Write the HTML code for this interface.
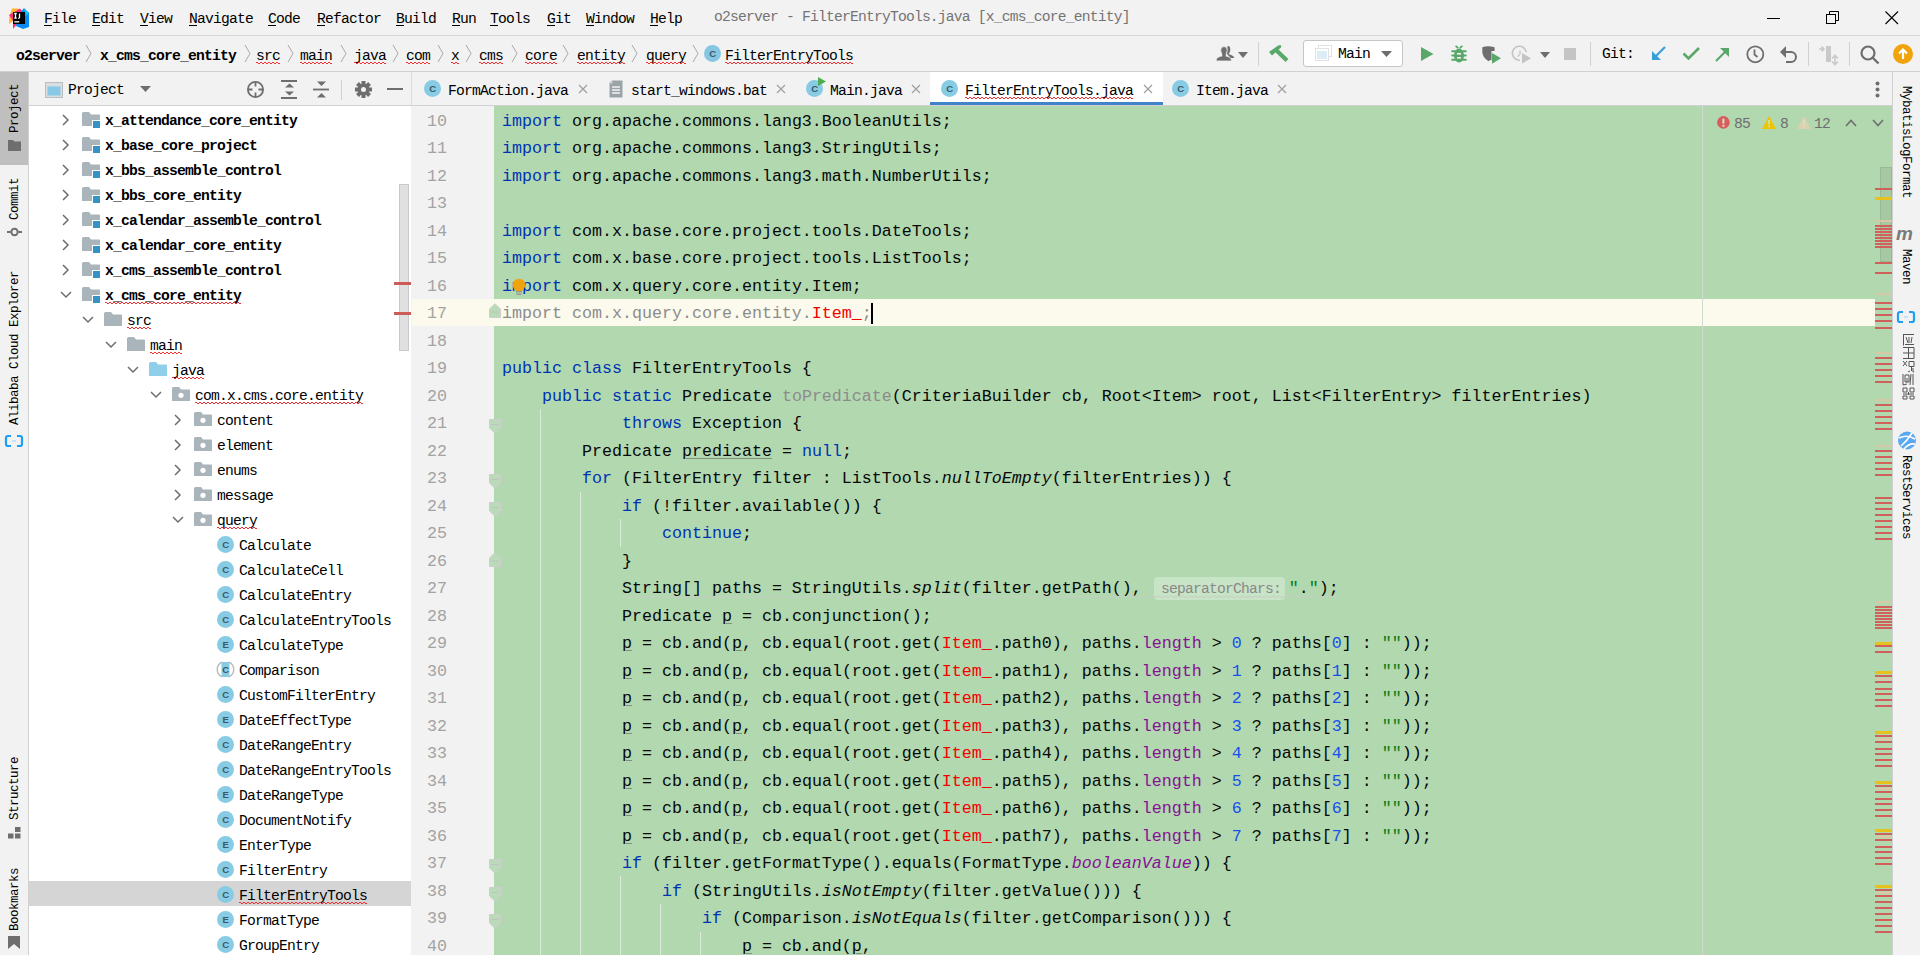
<!DOCTYPE html><html><head><meta charset="utf-8"><style>
*{margin:0;padding:0;box-sizing:border-box}
html,body{width:1920px;height:955px;overflow:hidden;background:#f2f2f2;font-family:"Liberation Mono",monospace;color:#000}
.a{position:absolute;white-space:pre}
.ui{font-size:14.67px;letter-spacing:-0.8px;line-height:16px}
.code{font-size:16.67px;white-space:pre;position:absolute;left:502px;height:27.5px;line-height:27.5px;color:#080808}
.kw{color:#0033b3}
.num{color:#1750eb}
.str{color:#067d17}
.fld{color:#871094}
.red{color:#f50000}
.gr{color:#8c8c8c}
.it{font-style:italic}
.ul{text-decoration:underline;text-decoration-color:#7f8f7e;text-underline-offset:2px;text-decoration-thickness:1px}
.wv{position:relative}.wv::after{content:'';position:absolute;left:0;right:0;bottom:0px;height:2px;background:repeating-linear-gradient(90deg,#f03030 0 2px,transparent 2px 4px) 0 0/100% 1px no-repeat,repeating-linear-gradient(90deg,transparent 0 2px,#f03030 2px 4px) 0 1px/100% 1px no-repeat}
.vt{writing-mode:vertical-rl;font-size:12.5px;letter-spacing:-0.5px;line-height:14px;color:#000}
.vl{transform:rotate(180deg)}
svg{position:absolute;overflow:visible}
</style></head><body><div class="a" style="left:0px;top:35px;width:1920px;height:1px;background:#d5d5d5;"></div><div class="a" style="left:0px;top:71px;width:1920px;height:1px;background:#d1d1d1;"></div><svg style="left:9px;top:8px;" width="21" height="21" viewBox="0 0 21 21"><polygon points="3,0.5 9,0.5 12,4 4,13 0,16 0.5,8" fill="#ffb42a"/>
<polygon points="0,7 7,3 11,0.5 14,4 10,14 4,21 4,13" fill="#fe2f7a"/>
<polygon points="15,0 20,5 20,19 14,21 7,18 9,8" fill="#0a8cf5"/>
<polygon points="15,1 20,5 17,8" fill="#13c5f5"/>
<rect x="4" y="4" width="12" height="12" fill="#000"/>
<path d="M5.2 5.5h2.6M6.5 5.5v4.6M5.2 10.1h2.6M10.5 5.5v3.8q0 1.1-1.3 1" stroke="#fff" stroke-width="1.3" fill="none"/><rect x="5.3" y="13.2" width="5" height="1.3" fill="#fff"/></svg><div class="a ui" style="left:44px;top:11px;"><u style="text-underline-offset:2px">F</u>ile</div><div class="a ui" style="left:92px;top:11px;"><u style="text-underline-offset:2px">E</u>dit</div><div class="a ui" style="left:140px;top:11px;"><u style="text-underline-offset:2px">V</u>iew</div><div class="a ui" style="left:189px;top:11px;"><u style="text-underline-offset:2px">N</u>avigate</div><div class="a ui" style="left:268px;top:11px;"><u style="text-underline-offset:2px">C</u>ode</div><div class="a ui" style="left:317px;top:11px;"><u style="text-underline-offset:2px">R</u>efactor</div><div class="a ui" style="left:396px;top:11px;"><u style="text-underline-offset:2px">B</u>uild</div><div class="a ui" style="left:452px;top:11px;"><u style="text-underline-offset:2px">R</u>un</div><div class="a ui" style="left:490px;top:11px;"><u style="text-underline-offset:2px">T</u>ools</div><div class="a ui" style="left:547px;top:11px;"><u style="text-underline-offset:2px">G</u>it</div><div class="a ui" style="left:586px;top:11px;"><u style="text-underline-offset:2px">W</u>indow</div><div class="a ui" style="left:650px;top:11px;"><u style="text-underline-offset:2px">H</u>elp</div><div class="a ui" style="left:714px;top:9px;color:#747474">o2server - FilterEntryTools.java [x_cms_core_entity]</div><div class="a" style="left:1767px;top:18px;width:13px;height:1px;background:#000;"></div><svg style="left:1826px;top:11px;" width="14" height="14" viewBox="0 0 14 14"><rect x="0.5" y="3.5" width="9" height="9" fill="none" stroke="#000"/><path d="M3.5 3.5V0.5h9v9h-3" fill="none" stroke="#000"/></svg><svg style="left:1885px;top:11px;" width="14" height="14" viewBox="0 0 14 14"><path d="M0.5 0.5L13 13M13 0.5L0.5 13" stroke="#000" stroke-width="1.1"/></svg><div class="a ui" style="left:16px;top:48px;font-weight:bold;">o2server</div><div class="a ui" style="left:100px;top:48px;font-weight:bold;">x_cms_core_entity</div><div class="a ui" style="left:256px;top:48px;"><span class="wv">src</span></div><div class="a ui" style="left:300px;top:48px;"><span class="wv">main</span></div><div class="a ui" style="left:354px;top:48px;"><span class="wv">java</span></div><div class="a ui" style="left:406px;top:48px;"><span class="wv">com</span></div><div class="a ui" style="left:451px;top:48px;"><span class="wv">x</span></div><div class="a ui" style="left:479px;top:48px;"><span class="wv">cms</span></div><div class="a ui" style="left:525px;top:48px;"><span class="wv">core</span></div><div class="a ui" style="left:577px;top:48px;"><span class="wv">entity</span></div><div class="a ui" style="left:646px;top:48px;"><span class="wv">query</span></div><svg style="left:85px;top:44px;" width="7" height="20" viewBox="0 0 7 20"><path d="M1 1L6 9.5L1 18" fill="none" stroke="#a8a8a8" stroke-width="1"/></svg><svg style="left:244px;top:44px;" width="7" height="20" viewBox="0 0 7 20"><path d="M1 1L6 9.5L1 18" fill="none" stroke="#a8a8a8" stroke-width="1"/></svg><svg style="left:287px;top:44px;" width="7" height="20" viewBox="0 0 7 20"><path d="M1 1L6 9.5L1 18" fill="none" stroke="#a8a8a8" stroke-width="1"/></svg><svg style="left:340px;top:44px;" width="7" height="20" viewBox="0 0 7 20"><path d="M1 1L6 9.5L1 18" fill="none" stroke="#a8a8a8" stroke-width="1"/></svg><svg style="left:392px;top:44px;" width="7" height="20" viewBox="0 0 7 20"><path d="M1 1L6 9.5L1 18" fill="none" stroke="#a8a8a8" stroke-width="1"/></svg><svg style="left:437px;top:44px;" width="7" height="20" viewBox="0 0 7 20"><path d="M1 1L6 9.5L1 18" fill="none" stroke="#a8a8a8" stroke-width="1"/></svg><svg style="left:465px;top:44px;" width="7" height="20" viewBox="0 0 7 20"><path d="M1 1L6 9.5L1 18" fill="none" stroke="#a8a8a8" stroke-width="1"/></svg><svg style="left:511px;top:44px;" width="7" height="20" viewBox="0 0 7 20"><path d="M1 1L6 9.5L1 18" fill="none" stroke="#a8a8a8" stroke-width="1"/></svg><svg style="left:562px;top:44px;" width="7" height="20" viewBox="0 0 7 20"><path d="M1 1L6 9.5L1 18" fill="none" stroke="#a8a8a8" stroke-width="1"/></svg><svg style="left:631px;top:44px;" width="7" height="20" viewBox="0 0 7 20"><path d="M1 1L6 9.5L1 18" fill="none" stroke="#a8a8a8" stroke-width="1"/></svg><svg style="left:692px;top:44px;" width="7" height="20" viewBox="0 0 7 20"><path d="M1 1L6 9.5L1 18" fill="none" stroke="#a8a8a8" stroke-width="1"/></svg><svg style="left:704px;top:45px;" width="17" height="17" viewBox="0 0 17 17"><circle cx="8.5" cy="8.5" r="8.5" fill="#87c6e3"/><text x="8.6" y="12.0" text-anchor="middle" font-size="9.5" font-family="Liberation Sans" font-weight="bold" fill="#3b5866">C</text></svg><div class="a ui" style="left:725px;top:48px;"><span class="wv">FilterEntryTools</span></div><svg style="left:1215px;top:45px;" width="20" height="17" viewBox="0 0 20 17"><path d="M12.5 1.2Q15.2 0.6 15.3 4.5Q15.3 8 13.5 9.2Q18.5 10.2 19.5 13H15.5L12 9z" fill="#6e6e6e"/><path d="M1 16Q1 11.3 8.8 10.8Q16.6 11.3 16.6 16z" fill="#6e6e6e" stroke="#f2f2f2" stroke-width=".8"/><ellipse cx="9" cy="5.4" rx="3.3" ry="3.9" fill="#6e6e6e" stroke="#f2f2f2" stroke-width=".8"/><rect x="7.2" y="8" width="3.6" height="4" fill="#6e6e6e"/></svg><svg style="left:1238px;top:52px;" width="11" height="7" viewBox="0 0 11 7"><path d="M0 0h10L5 6z" fill="#6e6e6e"/></svg><div class="a" style="left:1258px;top:42px;width:1px;height:24px;background:#d0d0d0;"></div><svg style="left:1268px;top:44px;" width="21" height="20" viewBox="0 0 21 20"><path d="M1 8L10.5 1.2H13.2L13 3.6L4 11.5z" fill="#59a869"/><path d="M7.5 5.5L19 16.5" stroke="#59a869" stroke-width="4.2"/></svg><div class="a" style="left:1303px;top:40px;width:100px;height:27px;background:#ffffff;border:1px solid #c6c6c6;border-radius:3px"></div><svg style="left:1315px;top:45px;" width="18" height="16" viewBox="0 0 18 16"><rect x="3.5" y="0.5" width="13" height="11" fill="none" stroke="#e2e2e2"/><rect x="0.5" y="3.5" width="13" height="12" fill="#fff" stroke="#e2e2e2"/><rect x="2" y="6" width="10" height="8" fill="#dcedf5"/></svg><div class="a ui" style="left:1338px;top:46px;">Main</div><svg style="left:1381px;top:51px;" width="11" height="7" viewBox="0 0 11 7"><path d="M0 0h11L5.5 6z" fill="#6e6e6e"/></svg><svg style="left:1421px;top:47px;" width="13" height="15" viewBox="0 0 13 15"><path d="M0 0L12.5 7L0 14z" fill="#59a869"/></svg><svg style="left:1450px;top:45px;" width="18" height="18" viewBox="0 0 18 18"><g fill="#59a869"><rect x="1.2" y="5.3" width="15.6" height="1.9" rx=".9"/><rect x="1.2" y="9.5" width="15.6" height="1.9" rx=".9"/><rect x="1.2" y="13.8" width="15.6" height="1.9" rx=".9"/><ellipse cx="9" cy="10.6" rx="5" ry="7"/></g><path d="M5.6 0.8L8.2 3.2M12.4 0.8L9.8 3.2" stroke="#59a869" stroke-width="1.8"/><rect x="7" y="8" width="4" height="1.6" fill="#f2f2f2"/><rect x="7" y="12" width="4" height="1.6" fill="#f2f2f2"/></svg><svg style="left:1482px;top:46px;" width="20" height="19" viewBox="0 0 20 19"><path d="M0.3 1.2Q6 -0.6 12.6 1.2V5H9.5V15Q9.5 13 6.4 15.2Q0.3 11 0.3 6z" fill="#6e6e6e"/><path d="M10 7L19 12.3L10 17.8z" fill="#59a869"/></svg><svg style="left:1512px;top:46px;" width="20" height="19" viewBox="0 0 20 19"><path d="M14.3 6A7 7 0 1 0 8 14.2" fill="none" stroke="#c4c4c4" stroke-width="1.6"/><path d="M8 4.5V8.2L5.6 10.6" stroke="#c4c4c4" stroke-width="1.3" fill="none"/><path d="M10 7L19 12.3L10 17.8z" fill="#c4c4c4"/></svg><svg style="left:1540px;top:52px;" width="11" height="7" viewBox="0 0 11 7"><path d="M0 0h10L5 6z" fill="#6e6e6e"/></svg><div class="a" style="left:1564px;top:48px;width:12px;height:12px;background:#c4c4c4;"></div><div class="a" style="left:1590px;top:42px;width:1px;height:24px;background:#d0d0d0;"></div><div class="a ui" style="left:1602px;top:46px;">Git:</div><svg style="left:1651px;top:46px;" width="15" height="15" viewBox="0 0 15 15"><path d="M14 1L3 12" stroke="#389fd6" stroke-width="2.2"/><path d="M1 5V14H10z" fill="#389fd6"/></svg><svg style="left:1682px;top:46px;" width="18" height="14" viewBox="0 0 18 14"><path d="M1.5 7.5L6.5 12.5L17 2" fill="none" stroke="#59a869" stroke-width="2.6"/></svg><svg style="left:1715px;top:47px;" width="15" height="15" viewBox="0 0 15 15"><path d="M1 14L12 3" stroke="#59a869" stroke-width="2.2"/><path d="M5 1H14V10z" fill="#59a869"/></svg><svg style="left:1746px;top:45px;" width="19" height="19" viewBox="0 0 19 19"><circle cx="9.3" cy="9.3" r="8" fill="none" stroke="#6e6e6e" stroke-width="1.8"/><path d="M8.5 4.5V9.5L11.5 12" fill="none" stroke="#6e6e6e" stroke-width="1.8"/></svg><svg style="left:1780px;top:46px;" width="18" height="16" viewBox="0 0 18 16"><path d="M4 6H11a5 5 0 0 1 0 10H6" fill="none" stroke="#6e6e6e" stroke-width="2"/><path d="M0 6L6 0V12z" fill="#6e6e6e"/></svg><div class="a" style="left:1808px;top:42px;width:1px;height:24px;background:#d0d0d0;"></div><svg style="left:1819px;top:45px;" width="22" height="20" viewBox="0 0 22 20"><rect x="7" y="1" width="5" height="16" fill="#c9c9c9"/><path d="M0 4h4M2.5 1.5L5 4L2.5 6.5" stroke="#c9c9c9" stroke-width="1.6" fill="none"/><path d="M16 11v8M13 13.5l3-3l3 3M13 16.5l3 3l3-3" stroke="#c9c9c9" stroke-width="1.6" fill="none"/></svg><div class="a" style="left:1849px;top:42px;width:1px;height:24px;background:#d0d0d0;"></div><svg style="left:1860px;top:45px;" width="20" height="19" viewBox="0 0 20 19"><circle cx="8" cy="8" r="6.5" fill="none" stroke="#6e6e6e" stroke-width="2.2"/><path d="M12.5 12.5L18.5 18.5" stroke="#6e6e6e" stroke-width="2.4"/></svg><svg style="left:1893px;top:44px;" width="20" height="20" viewBox="0 0 20 20"><circle cx="10" cy="10" r="10" fill="#f0a30b"/><path d="M10 15V6M6 9.5L10 5.5L14 9.5" stroke="#fff" stroke-width="2.2" fill="none"/></svg><div class="a" style="left:28px;top:72px;width:1px;height:883px;background:#d1d1d1;"></div><div class="a" style="left:0px;top:72px;width:28px;height:93px;background:#bfbfbf;"></div><div class="a vt vl" style="left:8px;top:82px;height:51px">Project</div><svg style="left:8px;top:139px;" width="13" height="12" viewBox="0 0 13 12"><path d="M0 1h5l1.5 1.5H13V12H0z" fill="#6e6e6e"/></svg><div class="a vt vl" style="left:8px;top:176px;height:44px">Commit</div><svg style="left:7px;top:226px;" width="15" height="12" viewBox="0 0 15 12"><circle cx="7.5" cy="6" r="3.2" fill="none" stroke="#6e6e6e" stroke-width="2"/><path d="M0 6h3.5M11.5 6H15" stroke="#6e6e6e" stroke-width="2"/></svg><div class="a vt vl" style="left:8px;top:269px;height:156px">Alibaba Cloud Explorer</div><svg style="left:5px;top:435px;" width="18" height="12" viewBox="0 0 18 12"><path d="M6 1H3Q1 1 1 3V9Q1 11 3 11H6M12 1H15Q17 1 17 3V9Q17 11 15 11H12" fill="none" stroke="#1e9ff2" stroke-width="2.2"/><rect x="7" y="5.4" width="4" height="1.2" fill="#a8d8f8"/></svg><div class="a vt vl" style="left:8px;top:755px;height:65px">Structure</div><svg style="left:8px;top:827px;" width="14" height="12" viewBox="0 0 14 12"><rect x="7" y="0" width="5.5" height="5" fill="#6e6e6e"/><rect x="0" y="6.5" width="5.5" height="5" fill="#6e6e6e"/><rect x="7" y="6.5" width="5.5" height="5" fill="#6e6e6e"/></svg><div class="a vt vl" style="left:8px;top:866px;height:65px">Bookmarks</div><svg style="left:8px;top:936px;" width="13" height="14" viewBox="0 0 13 14"><path d="M0 0H12V13L6 8L0 13z" fill="#6e6e6e"/></svg><div class="a" style="left:1892px;top:72px;width:1px;height:883px;background:#d1d1d1;"></div><div class="a vt" style="left:1899px;top:86px">MybatisLogFormat</div><svg style="left:1896px;top:226px;" width="22" height="16" viewBox="0 0 22 16"><text x="0" y="14" font-size="19" font-family="Liberation Sans" font-style="italic" font-weight="bold" fill="#7a7a7a">m</text></svg><div class="a vt" style="left:1899px;top:249px">Maven</div><svg style="left:1897px;top:311px;" width="18" height="12" viewBox="0 0 18 12"><path d="M6 1H3Q1 1 1 3V9Q1 11 3 11H6M12 1H15Q17 1 17 3V9Q17 11 15 11H12" fill="none" stroke="#1e9ff2" stroke-width="2.2"/><rect x="7" y="5.4" width="4" height="1.2" fill="#a8d8f8"/></svg><svg style="left:1902px;top:333px;" width="13" height="66" viewBox="0 0 13 66"><g stroke="#555" stroke-width="1" fill="none"><path d="M1 1.5h11M1.5 1.5v11M4 4l2 6M7 4v6M10 4l-1 6M3 11.5h9"/><path d="M1 14.5h11M1 25.5h11M1 20h11M6.5 14.5v11M12 14.5v11"/><path d="M1 28l4 5M5 28l-4 5M7 28.5h5v5h-5zM9.5 33v5M8 38l-2 1M11 35v4h1"/><path d="M1 41v11M3 42h4v7h-4zM5 45v4M9 41l-1 11M11 41v11M1 52l4-1"/><path d="M1 55h4v4h-4zM8 55h4v4h-4zM1 61h11M6.5 59v3M1 63h4v3h-4zM8 63h4v3h-4z"/></g></svg><svg style="left:1897px;top:431px;" width="20" height="19" viewBox="0 0 20 19"><circle cx="10" cy="9.5" r="9" fill="#5aa9f0"/><path d="M2 7Q10 3 18 8M4 15Q10 10 15 2M7 18Q12 12 18 13" fill="none" stroke="#fff" stroke-width="1.6"/></svg><div class="a vt" style="left:1899px;top:455px">RestServices</div><svg style="left:45px;top:82px;" width="18" height="16" viewBox="0 0 18 16"><rect x="0.5" y="0.5" width="17" height="15" fill="#d8dde0" stroke="#b9bec2"/><rect x="2.5" y="4.5" width="13" height="9" fill="#87c9e6"/></svg><div class="a ui" style="left:68px;top:82px;">Project</div><svg style="left:140px;top:86px;" width="11" height="7" viewBox="0 0 11 7"><path d="M0 0h11L5.5 6z" fill="#6e6e6e"/></svg><svg style="left:246px;top:80px;" width="19" height="19" viewBox="0 0 19 19"><circle cx="9.5" cy="9.5" r="7.6" fill="none" stroke="#6e6e6e" stroke-width="1.8"/><path d="M9.5 2v4.5M9.5 12.5v4.5M2 9.5h4.5M12.5 9.5h4.5" stroke="#6e6e6e" stroke-width="1.8"/></svg><svg style="left:281px;top:80px;" width="17" height="19" viewBox="0 0 17 19"><path d="M0 1h16M0 18h16" stroke="#6e6e6e" stroke-width="1.8"/><path d="M4 7.5L8.5 3.5L13 7.5zM4 11.5L8.5 15.5L13 11.5z" fill="#6e6e6e"/></svg><svg style="left:313px;top:80px;" width="17" height="19" viewBox="0 0 17 19"><path d="M0 9.5h16" stroke="#6e6e6e" stroke-width="1.8"/><path d="M4 1.5L8.5 6L13 1.5zM4 17.5L8.5 13L13 17.5z" fill="#6e6e6e"/></svg><div class="a" style="left:341px;top:80px;width:1px;height:20px;background:#d0d0d0;"></div><svg style="left:355px;top:81px;" width="17" height="17" viewBox="0 0 17 17"><g fill="#6e6e6e" transform="translate(8.5 8.5)"><circle r="6"/><rect x="-2" y="-8.5" width="4" height="4" transform="rotate(0)"/><rect x="-2" y="-8.5" width="4" height="4" transform="rotate(45)"/><rect x="-2" y="-8.5" width="4" height="4" transform="rotate(90)"/><rect x="-2" y="-8.5" width="4" height="4" transform="rotate(135)"/><rect x="-2" y="-8.5" width="4" height="4" transform="rotate(180)"/><rect x="-2" y="-8.5" width="4" height="4" transform="rotate(225)"/><rect x="-2" y="-8.5" width="4" height="4" transform="rotate(270)"/><rect x="-2" y="-8.5" width="4" height="4" transform="rotate(315)"/></g><circle cx="8.5" cy="8.5" r="2.5" fill="#f2f2f2"/></svg><div class="a" style="left:387px;top:88px;width:16px;height:2px;background:#6e6e6e;"></div><div class="a" style="left:411px;top:72px;width:1px;height:34px;background:#dcdcdc;"></div><div class="a" style="left:29px;top:106px;width:382px;height:849px;background:#ffffff;"></div><div class="a" style="left:29px;top:105px;width:1863px;height:1px;background:#d1d1d1;"></div><div class="a" style="left:29px;top:881px;width:382px;height:25px;background:#d5d5d5;"></div><svg style="left:62px;top:114px;" width="8" height="12" viewBox="0 0 8 12"><path d="M1 1L6 6L1 11" fill="none" stroke="#6e6e6e" stroke-width="1.5"/></svg><svg style="left:82px;top:112px;" width="18" height="16" viewBox="0 0 18 16"><path d="M0 1.5Q0 0 1.5 0H7L9 2.5H17Q18 2.5 18 3.5V14H0z" fill="#aab4bb"/><rect x="10" y="8" width="8" height="8" fill="#fff"/><rect x="11" y="9" width="7" height="7" fill="#3592c4"/></svg><div class="a ui" style="left:105px;top:113px;font-weight:bold;">x_attendance_core_entity</div><svg style="left:62px;top:139px;" width="8" height="12" viewBox="0 0 8 12"><path d="M1 1L6 6L1 11" fill="none" stroke="#6e6e6e" stroke-width="1.5"/></svg><svg style="left:82px;top:137px;" width="18" height="16" viewBox="0 0 18 16"><path d="M0 1.5Q0 0 1.5 0H7L9 2.5H17Q18 2.5 18 3.5V14H0z" fill="#aab4bb"/><rect x="10" y="8" width="8" height="8" fill="#fff"/><rect x="11" y="9" width="7" height="7" fill="#3592c4"/></svg><div class="a ui" style="left:105px;top:138px;font-weight:bold;">x_base_core_project</div><svg style="left:62px;top:164px;" width="8" height="12" viewBox="0 0 8 12"><path d="M1 1L6 6L1 11" fill="none" stroke="#6e6e6e" stroke-width="1.5"/></svg><svg style="left:82px;top:162px;" width="18" height="16" viewBox="0 0 18 16"><path d="M0 1.5Q0 0 1.5 0H7L9 2.5H17Q18 2.5 18 3.5V14H0z" fill="#aab4bb"/><rect x="10" y="8" width="8" height="8" fill="#fff"/><rect x="11" y="9" width="7" height="7" fill="#3592c4"/></svg><div class="a ui" style="left:105px;top:163px;font-weight:bold;">x_bbs_assemble_control</div><svg style="left:62px;top:189px;" width="8" height="12" viewBox="0 0 8 12"><path d="M1 1L6 6L1 11" fill="none" stroke="#6e6e6e" stroke-width="1.5"/></svg><svg style="left:82px;top:187px;" width="18" height="16" viewBox="0 0 18 16"><path d="M0 1.5Q0 0 1.5 0H7L9 2.5H17Q18 2.5 18 3.5V14H0z" fill="#aab4bb"/><rect x="10" y="8" width="8" height="8" fill="#fff"/><rect x="11" y="9" width="7" height="7" fill="#3592c4"/></svg><div class="a ui" style="left:105px;top:188px;font-weight:bold;">x_bbs_core_entity</div><svg style="left:62px;top:214px;" width="8" height="12" viewBox="0 0 8 12"><path d="M1 1L6 6L1 11" fill="none" stroke="#6e6e6e" stroke-width="1.5"/></svg><svg style="left:82px;top:212px;" width="18" height="16" viewBox="0 0 18 16"><path d="M0 1.5Q0 0 1.5 0H7L9 2.5H17Q18 2.5 18 3.5V14H0z" fill="#aab4bb"/><rect x="10" y="8" width="8" height="8" fill="#fff"/><rect x="11" y="9" width="7" height="7" fill="#3592c4"/></svg><div class="a ui" style="left:105px;top:213px;font-weight:bold;">x_calendar_assemble_control</div><svg style="left:62px;top:239px;" width="8" height="12" viewBox="0 0 8 12"><path d="M1 1L6 6L1 11" fill="none" stroke="#6e6e6e" stroke-width="1.5"/></svg><svg style="left:82px;top:237px;" width="18" height="16" viewBox="0 0 18 16"><path d="M0 1.5Q0 0 1.5 0H7L9 2.5H17Q18 2.5 18 3.5V14H0z" fill="#aab4bb"/><rect x="10" y="8" width="8" height="8" fill="#fff"/><rect x="11" y="9" width="7" height="7" fill="#3592c4"/></svg><div class="a ui" style="left:105px;top:238px;font-weight:bold;">x_calendar_core_entity</div><svg style="left:62px;top:264px;" width="8" height="12" viewBox="0 0 8 12"><path d="M1 1L6 6L1 11" fill="none" stroke="#6e6e6e" stroke-width="1.5"/></svg><svg style="left:82px;top:262px;" width="18" height="16" viewBox="0 0 18 16"><path d="M0 1.5Q0 0 1.5 0H7L9 2.5H17Q18 2.5 18 3.5V14H0z" fill="#aab4bb"/><rect x="10" y="8" width="8" height="8" fill="#fff"/><rect x="11" y="9" width="7" height="7" fill="#3592c4"/></svg><div class="a ui" style="left:105px;top:263px;font-weight:bold;">x_cms_assemble_control</div><svg style="left:60px;top:291px;" width="12" height="8" viewBox="0 0 12 8"><path d="M1 1L6 6L11 1" fill="none" stroke="#6e6e6e" stroke-width="1.5"/></svg><svg style="left:82px;top:287px;" width="18" height="16" viewBox="0 0 18 16"><path d="M0 1.5Q0 0 1.5 0H7L9 2.5H17Q18 2.5 18 3.5V14H0z" fill="#aab4bb"/><rect x="10" y="8" width="8" height="8" fill="#fff"/><rect x="11" y="9" width="7" height="7" fill="#3592c4"/></svg><div class="a ui" style="left:105px;top:288px;font-weight:bold;"><span class="wv">x_cms_core_entity</span></div><svg style="left:82px;top:316px;" width="12" height="8" viewBox="0 0 12 8"><path d="M1 1L6 6L11 1" fill="none" stroke="#6e6e6e" stroke-width="1.5"/></svg><svg style="left:104px;top:312px;" width="18" height="16" viewBox="0 0 18 16"><path d="M0 1.5Q0 0 1.5 0H7L9 2.5H17Q18 2.5 18 3.5V14H0z" fill="#aab4bb"/></svg><div class="a ui" style="left:127px;top:313px;"><span class="wv">src</span></div><svg style="left:105px;top:341px;" width="12" height="8" viewBox="0 0 12 8"><path d="M1 1L6 6L11 1" fill="none" stroke="#6e6e6e" stroke-width="1.5"/></svg><svg style="left:127px;top:337px;" width="18" height="16" viewBox="0 0 18 16"><path d="M0 1.5Q0 0 1.5 0H7L9 2.5H17Q18 2.5 18 3.5V14H0z" fill="#aab4bb"/></svg><div class="a ui" style="left:150px;top:338px;"><span class="wv">main</span></div><svg style="left:127px;top:366px;" width="12" height="8" viewBox="0 0 12 8"><path d="M1 1L6 6L11 1" fill="none" stroke="#6e6e6e" stroke-width="1.5"/></svg><svg style="left:149px;top:362px;" width="18" height="16" viewBox="0 0 18 16"><path d="M0 1.5Q0 0 1.5 0H7L9 2.5H17Q18 2.5 18 3.5V14H0z" fill="#8fcfea"/></svg><div class="a ui" style="left:172px;top:363px;"><span class="wv">java</span></div><svg style="left:150px;top:391px;" width="12" height="8" viewBox="0 0 12 8"><path d="M1 1L6 6L11 1" fill="none" stroke="#6e6e6e" stroke-width="1.5"/></svg><svg style="left:172px;top:387px;" width="18" height="16" viewBox="0 0 18 16"><path d="M0 1.5Q0 0 1.5 0H7L9 2.5H17Q18 2.5 18 3.5V14H0z" fill="#aab4bb"/><circle cx="9" cy="8.3" r="2.6" fill="#fff"/></svg><div class="a ui" style="left:195px;top:388px;"><span class="wv">com.x.cms.core.entity</span></div><svg style="left:174px;top:414px;" width="8" height="12" viewBox="0 0 8 12"><path d="M1 1L6 6L1 11" fill="none" stroke="#6e6e6e" stroke-width="1.5"/></svg><svg style="left:194px;top:412px;" width="18" height="16" viewBox="0 0 18 16"><path d="M0 1.5Q0 0 1.5 0H7L9 2.5H17Q18 2.5 18 3.5V14H0z" fill="#aab4bb"/><circle cx="9" cy="8.3" r="2.6" fill="#fff"/></svg><div class="a ui" style="left:217px;top:413px;">content</div><svg style="left:174px;top:439px;" width="8" height="12" viewBox="0 0 8 12"><path d="M1 1L6 6L1 11" fill="none" stroke="#6e6e6e" stroke-width="1.5"/></svg><svg style="left:194px;top:437px;" width="18" height="16" viewBox="0 0 18 16"><path d="M0 1.5Q0 0 1.5 0H7L9 2.5H17Q18 2.5 18 3.5V14H0z" fill="#aab4bb"/><circle cx="9" cy="8.3" r="2.6" fill="#fff"/></svg><div class="a ui" style="left:217px;top:438px;">element</div><svg style="left:174px;top:464px;" width="8" height="12" viewBox="0 0 8 12"><path d="M1 1L6 6L1 11" fill="none" stroke="#6e6e6e" stroke-width="1.5"/></svg><svg style="left:194px;top:462px;" width="18" height="16" viewBox="0 0 18 16"><path d="M0 1.5Q0 0 1.5 0H7L9 2.5H17Q18 2.5 18 3.5V14H0z" fill="#aab4bb"/><circle cx="9" cy="8.3" r="2.6" fill="#fff"/></svg><div class="a ui" style="left:217px;top:463px;">enums</div><svg style="left:174px;top:489px;" width="8" height="12" viewBox="0 0 8 12"><path d="M1 1L6 6L1 11" fill="none" stroke="#6e6e6e" stroke-width="1.5"/></svg><svg style="left:194px;top:487px;" width="18" height="16" viewBox="0 0 18 16"><path d="M0 1.5Q0 0 1.5 0H7L9 2.5H17Q18 2.5 18 3.5V14H0z" fill="#aab4bb"/><circle cx="9" cy="8.3" r="2.6" fill="#fff"/></svg><div class="a ui" style="left:217px;top:488px;">message</div><svg style="left:172px;top:516px;" width="12" height="8" viewBox="0 0 12 8"><path d="M1 1L6 6L11 1" fill="none" stroke="#6e6e6e" stroke-width="1.5"/></svg><svg style="left:194px;top:512px;" width="18" height="16" viewBox="0 0 18 16"><path d="M0 1.5Q0 0 1.5 0H7L9 2.5H17Q18 2.5 18 3.5V14H0z" fill="#aab4bb"/><circle cx="9" cy="8.3" r="2.6" fill="#fff"/></svg><div class="a ui" style="left:217px;top:513px;"><span class="wv">query</span></div><svg style="left:217px;top:536px;" width="17" height="17" viewBox="0 0 17 17"><circle cx="8.5" cy="8.5" r="8.5" fill="#87cbe4"/><text x="8.6" y="12.1" text-anchor="middle" font-size="9.5" font-family="Liberation Sans" font-weight="bold" fill="#3b5866">C</text></svg><div class="a ui" style="left:239px;top:538px;">Calculate</div><svg style="left:217px;top:561px;" width="17" height="17" viewBox="0 0 17 17"><circle cx="8.5" cy="8.5" r="8.5" fill="#87cbe4"/><text x="8.6" y="12.1" text-anchor="middle" font-size="9.5" font-family="Liberation Sans" font-weight="bold" fill="#3b5866">C</text></svg><div class="a ui" style="left:239px;top:563px;">CalculateCell</div><svg style="left:217px;top:586px;" width="17" height="17" viewBox="0 0 17 17"><circle cx="8.5" cy="8.5" r="8.5" fill="#87cbe4"/><text x="8.6" y="12.1" text-anchor="middle" font-size="9.5" font-family="Liberation Sans" font-weight="bold" fill="#3b5866">C</text></svg><div class="a ui" style="left:239px;top:588px;">CalculateEntry</div><svg style="left:217px;top:611px;" width="17" height="17" viewBox="0 0 17 17"><circle cx="8.5" cy="8.5" r="8.5" fill="#87cbe4"/><text x="8.6" y="12.1" text-anchor="middle" font-size="9.5" font-family="Liberation Sans" font-weight="bold" fill="#3b5866">C</text></svg><div class="a ui" style="left:239px;top:613px;">CalculateEntryTools</div><svg style="left:217px;top:636px;" width="17" height="17" viewBox="0 0 17 17"><circle cx="8.5" cy="8.5" r="8.5" fill="#87cbe4"/><text x="8.6" y="12.1" text-anchor="middle" font-size="9.5" font-family="Liberation Sans" font-weight="bold" fill="#3b5866">E</text></svg><div class="a ui" style="left:239px;top:638px;">CalculateType</div><svg style="left:217px;top:661px;" width="17" height="17" viewBox="0 0 17 17"><path d="M5 1.2A8 8 0 0 0 5 15.8" fill="none" stroke="#b9b9b9" stroke-width="1.4"/><path d="M12 1.2A8 8 0 0 1 12 15.8" fill="none" stroke="#b9b9b9" stroke-width="1.4"/><rect x="4.5" y="1" width="8" height="15" fill="#87cbe4"/><text x="8.6" y="12.1" text-anchor="middle" font-size="9.5" font-family="Liberation Sans" font-weight="bold" fill="#3b5866">C</text></svg><div class="a ui" style="left:239px;top:663px;">Comparison</div><svg style="left:217px;top:686px;" width="17" height="17" viewBox="0 0 17 17"><circle cx="8.5" cy="8.5" r="8.5" fill="#87cbe4"/><text x="8.6" y="12.1" text-anchor="middle" font-size="9.5" font-family="Liberation Sans" font-weight="bold" fill="#3b5866">C</text></svg><div class="a ui" style="left:239px;top:688px;">CustomFilterEntry</div><svg style="left:217px;top:711px;" width="17" height="17" viewBox="0 0 17 17"><circle cx="8.5" cy="8.5" r="8.5" fill="#87cbe4"/><text x="8.6" y="12.1" text-anchor="middle" font-size="9.5" font-family="Liberation Sans" font-weight="bold" fill="#3b5866">E</text></svg><div class="a ui" style="left:239px;top:713px;">DateEffectType</div><svg style="left:217px;top:736px;" width="17" height="17" viewBox="0 0 17 17"><circle cx="8.5" cy="8.5" r="8.5" fill="#87cbe4"/><text x="8.6" y="12.1" text-anchor="middle" font-size="9.5" font-family="Liberation Sans" font-weight="bold" fill="#3b5866">C</text></svg><div class="a ui" style="left:239px;top:738px;">DateRangeEntry</div><svg style="left:217px;top:761px;" width="17" height="17" viewBox="0 0 17 17"><circle cx="8.5" cy="8.5" r="8.5" fill="#87cbe4"/><text x="8.6" y="12.1" text-anchor="middle" font-size="9.5" font-family="Liberation Sans" font-weight="bold" fill="#3b5866">C</text></svg><div class="a ui" style="left:239px;top:763px;">DateRangeEntryTools</div><svg style="left:217px;top:786px;" width="17" height="17" viewBox="0 0 17 17"><circle cx="8.5" cy="8.5" r="8.5" fill="#87cbe4"/><text x="8.6" y="12.1" text-anchor="middle" font-size="9.5" font-family="Liberation Sans" font-weight="bold" fill="#3b5866">E</text></svg><div class="a ui" style="left:239px;top:788px;">DateRangeType</div><svg style="left:217px;top:811px;" width="17" height="17" viewBox="0 0 17 17"><circle cx="8.5" cy="8.5" r="8.5" fill="#87cbe4"/><text x="8.6" y="12.1" text-anchor="middle" font-size="9.5" font-family="Liberation Sans" font-weight="bold" fill="#3b5866">C</text></svg><div class="a ui" style="left:239px;top:813px;">DocumentNotify</div><svg style="left:217px;top:836px;" width="17" height="17" viewBox="0 0 17 17"><circle cx="8.5" cy="8.5" r="8.5" fill="#87cbe4"/><text x="8.6" y="12.1" text-anchor="middle" font-size="9.5" font-family="Liberation Sans" font-weight="bold" fill="#3b5866">E</text></svg><div class="a ui" style="left:239px;top:838px;">EnterType</div><svg style="left:217px;top:861px;" width="17" height="17" viewBox="0 0 17 17"><circle cx="8.5" cy="8.5" r="8.5" fill="#87cbe4"/><text x="8.6" y="12.1" text-anchor="middle" font-size="9.5" font-family="Liberation Sans" font-weight="bold" fill="#3b5866">C</text></svg><div class="a ui" style="left:239px;top:863px;">FilterEntry</div><svg style="left:217px;top:886px;" width="17" height="17" viewBox="0 0 17 17"><circle cx="8.5" cy="8.5" r="8.5" fill="#87cbe4"/><text x="8.6" y="12.1" text-anchor="middle" font-size="9.5" font-family="Liberation Sans" font-weight="bold" fill="#3b5866">C</text></svg><div class="a ui" style="left:239px;top:888px;"><span class="wv">FilterEntryTools</span></div><svg style="left:217px;top:911px;" width="17" height="17" viewBox="0 0 17 17"><circle cx="8.5" cy="8.5" r="8.5" fill="#87cbe4"/><text x="8.6" y="12.1" text-anchor="middle" font-size="9.5" font-family="Liberation Sans" font-weight="bold" fill="#3b5866">E</text></svg><div class="a ui" style="left:239px;top:913px;">FormatType</div><svg style="left:217px;top:936px;" width="17" height="17" viewBox="0 0 17 17"><circle cx="8.5" cy="8.5" r="8.5" fill="#87cbe4"/><text x="8.6" y="12.1" text-anchor="middle" font-size="9.5" font-family="Liberation Sans" font-weight="bold" fill="#3b5866">C</text></svg><div class="a ui" style="left:239px;top:938px;">GroupEntry</div><div class="a" style="left:399px;top:184px;width:10px;height:167px;background:#e0e0e0;border:1px solid #c9c9c9"></div><div class="a" style="left:394px;top:282px;width:17px;height:3px;background:#cc5c58;"></div><div class="a" style="left:394px;top:312px;width:17px;height:3px;background:#cc5c58;"></div><div class="a" style="left:412px;top:72px;width:1480px;height:33px;background:#f2f2f2;"></div><div class="a" style="left:930px;top:72px;width:233px;height:33px;background:#ffffff;"></div><div class="a" style="left:930px;top:102px;width:233px;height:3px;background:#4083c9;"></div><svg style="left:424px;top:80px;" width="17" height="17" viewBox="0 0 17 17"><circle cx="8.5" cy="8.5" r="8.5" fill="#87cbe4"/><text x="8.6" y="12.1" text-anchor="middle" font-size="9.5" font-family="Liberation Sans" font-weight="bold" fill="#3b5866">C</text></svg><div class="a ui" style="left:448px;top:83px;">FormAction.java</div><svg style="left:578px;top:84px;" width="10" height="10" viewBox="0 0 10 10"><path d="M1 1L9 9M9 1L1 9" stroke="#a0a0a0" stroke-width="1.2"/></svg><svg style="left:609px;top:80px;" width="14" height="18" viewBox="0 0 14 18"><path d="M3 0.5H13.5V17.5H0.5V3z" fill="#9aa3a8"/><path d="M0.5 3.5H3.5V0.5" fill="#d5d5d5"/><path d="M3 7h8M3 10h8M3 13h8" stroke="#f2f2f2" stroke-width="1.3"/></svg><div class="a ui" style="left:631px;top:83px;">start_windows.bat</div><svg style="left:776px;top:84px;" width="10" height="10" viewBox="0 0 10 10"><path d="M1 1L9 9M9 1L1 9" stroke="#a0a0a0" stroke-width="1.2"/></svg><svg style="left:806px;top:80px;" width="17" height="17" viewBox="0 0 17 17"><circle cx="8.5" cy="8.5" r="8.5" fill="#87cbe4"/><text x="8.6" y="12.1" text-anchor="middle" font-size="9.5" font-family="Liberation Sans" font-weight="bold" fill="#3b5866">C</text></svg><svg style="left:817px;top:77px;" width="10" height="10" viewBox="0 0 10 10"><path d="M1 0L9 4.5L1 9z" fill="#4cae4f"/></svg><div class="a ui" style="left:830px;top:83px;">Main.java</div><svg style="left:911px;top:84px;" width="10" height="10" viewBox="0 0 10 10"><path d="M1 1L9 9M9 1L1 9" stroke="#a0a0a0" stroke-width="1.2"/></svg><svg style="left:941px;top:80px;" width="17" height="17" viewBox="0 0 17 17"><circle cx="8.5" cy="8.5" r="8.5" fill="#87cbe4"/><text x="8.6" y="12.1" text-anchor="middle" font-size="9.5" font-family="Liberation Sans" font-weight="bold" fill="#3b5866">C</text></svg><div class="a ui" style="left:965px;top:83px;"><span class="wv">FilterEntryTools.java</span></div><svg style="left:1143px;top:84px;" width="10" height="10" viewBox="0 0 10 10"><path d="M1 1L9 9M9 1L1 9" stroke="#a0a0a0" stroke-width="1.2"/></svg><svg style="left:1172px;top:80px;" width="17" height="17" viewBox="0 0 17 17"><circle cx="8.5" cy="8.5" r="8.5" fill="#87cbe4"/><text x="8.6" y="12.1" text-anchor="middle" font-size="9.5" font-family="Liberation Sans" font-weight="bold" fill="#3b5866">C</text></svg><div class="a ui" style="left:1196px;top:83px;">Item.java</div><svg style="left:1277px;top:84px;" width="10" height="10" viewBox="0 0 10 10"><path d="M1 1L9 9M9 1L1 9" stroke="#a0a0a0" stroke-width="1.2"/></svg><svg style="left:1875px;top:81px;" width="5" height="17" viewBox="0 0 5 17"><circle cx="2.5" cy="2.5" r="2" fill="#6e6e6e"/><circle cx="2.5" cy="8.5" r="2" fill="#6e6e6e"/><circle cx="2.5" cy="14.5" r="2" fill="#6e6e6e"/></svg><div class="a" style="left:412px;top:106px;width:82px;height:849px;background:#f2f2f2;"></div><div class="a" style="left:494px;top:106px;width:1398px;height:849px;background:#b2d8b0;"></div><div class="a" style="left:412px;top:299px;width:1463px;height:27px;background:#fcfaed;"></div><div class="a" style="left:1702px;top:106px;width:1px;height:849px;background:#d2d9d1;"></div><div class="code" style="left:412px;width:35px;text-align:right;top:107.5px;color:#a3a3a3">10</div><div class="code" style="left:412px;width:35px;text-align:right;top:135.0px;color:#a3a3a3">11</div><div class="code" style="left:412px;width:35px;text-align:right;top:162.5px;color:#a3a3a3">12</div><div class="code" style="left:412px;width:35px;text-align:right;top:190.0px;color:#a3a3a3">13</div><div class="code" style="left:412px;width:35px;text-align:right;top:217.5px;color:#a3a3a3">14</div><div class="code" style="left:412px;width:35px;text-align:right;top:245.0px;color:#a3a3a3">15</div><div class="code" style="left:412px;width:35px;text-align:right;top:272.5px;color:#a3a3a3">16</div><div class="code" style="left:412px;width:35px;text-align:right;top:300.0px;color:#a3a3a3">17</div><div class="code" style="left:412px;width:35px;text-align:right;top:327.5px;color:#a3a3a3">18</div><div class="code" style="left:412px;width:35px;text-align:right;top:355.0px;color:#a3a3a3">19</div><div class="code" style="left:412px;width:35px;text-align:right;top:382.5px;color:#a3a3a3">20</div><div class="code" style="left:412px;width:35px;text-align:right;top:410.0px;color:#a3a3a3">21</div><div class="code" style="left:412px;width:35px;text-align:right;top:437.5px;color:#a3a3a3">22</div><div class="code" style="left:412px;width:35px;text-align:right;top:465.0px;color:#a3a3a3">23</div><div class="code" style="left:412px;width:35px;text-align:right;top:492.5px;color:#a3a3a3">24</div><div class="code" style="left:412px;width:35px;text-align:right;top:520.0px;color:#a3a3a3">25</div><div class="code" style="left:412px;width:35px;text-align:right;top:547.5px;color:#a3a3a3">26</div><div class="code" style="left:412px;width:35px;text-align:right;top:575.0px;color:#a3a3a3">27</div><div class="code" style="left:412px;width:35px;text-align:right;top:602.5px;color:#a3a3a3">28</div><div class="code" style="left:412px;width:35px;text-align:right;top:630.0px;color:#a3a3a3">29</div><div class="code" style="left:412px;width:35px;text-align:right;top:657.5px;color:#a3a3a3">30</div><div class="code" style="left:412px;width:35px;text-align:right;top:685.0px;color:#a3a3a3">31</div><div class="code" style="left:412px;width:35px;text-align:right;top:712.5px;color:#a3a3a3">32</div><div class="code" style="left:412px;width:35px;text-align:right;top:740.0px;color:#a3a3a3">33</div><div class="code" style="left:412px;width:35px;text-align:right;top:767.5px;color:#a3a3a3">34</div><div class="code" style="left:412px;width:35px;text-align:right;top:795.0px;color:#a3a3a3">35</div><div class="code" style="left:412px;width:35px;text-align:right;top:822.5px;color:#a3a3a3">36</div><div class="code" style="left:412px;width:35px;text-align:right;top:850.0px;color:#a3a3a3">37</div><div class="code" style="left:412px;width:35px;text-align:right;top:877.5px;color:#a3a3a3">38</div><div class="code" style="left:412px;width:35px;text-align:right;top:905.0px;color:#a3a3a3">39</div><div class="code" style="left:412px;width:35px;text-align:right;top:932.5px;color:#a3a3a3">40</div><div class="code" style="top:107.5px"><span class="kw">import</span> org.apache.commons.lang3.BooleanUtils;</div><div class="code" style="top:135.0px"><span class="kw">import</span> org.apache.commons.lang3.StringUtils;</div><div class="code" style="top:162.5px"><span class="kw">import</span> org.apache.commons.lang3.math.NumberUtils;</div><div class="code" style="top:217.5px"><span class="kw">import</span> com.x.base.core.project.tools.DateTools;</div><div class="code" style="top:245.0px"><span class="kw">import</span> com.x.base.core.project.tools.ListTools;</div><div class="code" style="top:272.5px"><span class="kw">import</span> com.x.query.core.entity.Item;</div><div class="code" style="top:300.0px"><span class="gr">import com.x.query.core.entity.</span><span class="red">Item_</span><span class="gr">;</span></div><div class="code" style="top:355.0px"><span class="kw">public class</span> FilterEntryTools {</div><div class="code" style="top:382.5px">    <span class="kw">public static</span> Predicate <span class="gr">toPredicate</span>(CriteriaBuilder cb, Root&lt;Item&gt; root, List&lt;FilterEntry&gt; filterEntries)</div><div class="code" style="top:410.0px">            <span class="kw">throws</span> Exception {</div><div class="code" style="top:437.5px">        Predicate <span class="ul">predicate</span> = <span class="kw">null</span>;</div><div class="code" style="top:465.0px">        <span class="kw">for</span> (FilterEntry filter : ListTools.<span class="it">nullToEmpty</span>(filterEntries)) {</div><div class="code" style="top:492.5px">            <span class="kw">if</span> (!filter.available()) {</div><div class="code" style="top:520.0px">                <span class="kw">continue</span>;</div><div class="code" style="top:547.5px">            }</div><div class="code" style="top:575.0px">            String[] paths = StringUtils.<span class="it">split</span>(filter.getPath(), <span style="display:inline-block;width:137px"></span><span class="str">"</span>.<span class="str">"</span>);</div><div class="code" style="top:602.5px">            Predicate <span class="ul">p</span> = cb.conjunction();</div><div class="code" style="top:630.0px">            <span class="ul">p</span> = cb.and(<span class="ul">p</span>, cb.equal(root.get(<span class="red">Item_</span>.path0), paths.<span class="fld">length</span> &gt; <span class="num">0</span> ? paths[<span class="num">0</span>] : <span class="str">""</span>));</div><div class="code" style="top:657.5px">            <span class="ul">p</span> = cb.and(<span class="ul">p</span>, cb.equal(root.get(<span class="red">Item_</span>.path1), paths.<span class="fld">length</span> &gt; <span class="num">1</span> ? paths[<span class="num">1</span>] : <span class="str">""</span>));</div><div class="code" style="top:685.0px">            <span class="ul">p</span> = cb.and(<span class="ul">p</span>, cb.equal(root.get(<span class="red">Item_</span>.path2), paths.<span class="fld">length</span> &gt; <span class="num">2</span> ? paths[<span class="num">2</span>] : <span class="str">""</span>));</div><div class="code" style="top:712.5px">            <span class="ul">p</span> = cb.and(<span class="ul">p</span>, cb.equal(root.get(<span class="red">Item_</span>.path3), paths.<span class="fld">length</span> &gt; <span class="num">3</span> ? paths[<span class="num">3</span>] : <span class="str">""</span>));</div><div class="code" style="top:740.0px">            <span class="ul">p</span> = cb.and(<span class="ul">p</span>, cb.equal(root.get(<span class="red">Item_</span>.path4), paths.<span class="fld">length</span> &gt; <span class="num">4</span> ? paths[<span class="num">4</span>] : <span class="str">""</span>));</div><div class="code" style="top:767.5px">            <span class="ul">p</span> = cb.and(<span class="ul">p</span>, cb.equal(root.get(<span class="red">Item_</span>.path5), paths.<span class="fld">length</span> &gt; <span class="num">5</span> ? paths[<span class="num">5</span>] : <span class="str">""</span>));</div><div class="code" style="top:795.0px">            <span class="ul">p</span> = cb.and(<span class="ul">p</span>, cb.equal(root.get(<span class="red">Item_</span>.path6), paths.<span class="fld">length</span> &gt; <span class="num">6</span> ? paths[<span class="num">6</span>] : <span class="str">""</span>));</div><div class="code" style="top:822.5px">            <span class="ul">p</span> = cb.and(<span class="ul">p</span>, cb.equal(root.get(<span class="red">Item_</span>.path7), paths.<span class="fld">length</span> &gt; <span class="num">7</span> ? paths[<span class="num">7</span>] : <span class="str">""</span>));</div><div class="code" style="top:850.0px">            <span class="kw">if</span> (filter.getFormatType().equals(FormatType.<span class="fld"><span class="it">booleanValue</span></span>)) {</div><div class="code" style="top:877.5px">                <span class="kw">if</span> (StringUtils.<span class="it">isNotEmpty</span>(filter.getValue())) {</div><div class="code" style="top:905.0px">                    <span class="kw">if</span> (Comparison.<span class="it">isNotEquals</span>(filter.getComparison())) {</div><div class="code" style="top:932.5px">                        <span class="ul">p</span> = cb.and(<span class="ul">p</span>,</div><div class="a" style="left:1154px;top:577px;width:131px;height:23px;background:#c8e4c6;border-radius:4px"></div><div class="a" style="left:1161px;top:581px;font-size:14.67px;letter-spacing:-0.8px;line-height:16px;color:#888">separatorChars:</div><div class="a" style="left:871px;top:303px;width:2px;height:21px;background:#000;"></div><div class="a" style="left:540px;top:409px;width:1px;height:550px;background:#dbeada;"></div><div class="a" style="left:580px;top:492px;width:1px;height:468px;background:#dbeada;"></div><div class="a" style="left:620px;top:519px;width:1px;height:28px;background:#dbeada;"></div><div class="a" style="left:620px;top:876px;width:1px;height:82px;background:#dbeada;"></div><div class="a" style="left:660px;top:904px;width:1px;height:55px;background:#dbeada;"></div><div class="a" style="left:700px;top:932px;width:1px;height:28px;background:#dbeada;"></div><svg style="left:489px;top:303.0px;" width="12" height="15" viewBox="0 0 12 15"><path d="M0.5 14.5V6L6 0.8L11.5 6V14.5z" fill="#b9dbb7" stroke="#cdcdcd"/><path d="M2.5 9h7" stroke="#c0c0c0"/></svg><svg style="left:489px;top:419.0px;" width="12" height="15" viewBox="0 0 12 15"><path d="M0.5 0.5V9L6 14.2L11.5 9V0.5z" fill="#b9dbb7" stroke="#cdcdcd"/><path d="M2.5 5.5h7" stroke="#c0c0c0"/></svg><svg style="left:489px;top:474.0px;" width="12" height="15" viewBox="0 0 12 15"><path d="M0.5 0.5V9L6 14.2L11.5 9V0.5z" fill="#b9dbb7" stroke="#cdcdcd"/><path d="M2.5 5.5h7" stroke="#c0c0c0"/></svg><svg style="left:489px;top:501.5px;" width="12" height="15" viewBox="0 0 12 15"><path d="M0.5 0.5V9L6 14.2L11.5 9V0.5z" fill="#b9dbb7" stroke="#cdcdcd"/><path d="M2.5 5.5h7" stroke="#c0c0c0"/></svg><svg style="left:489px;top:859.0px;" width="12" height="15" viewBox="0 0 12 15"><path d="M0.5 0.5V9L6 14.2L11.5 9V0.5z" fill="#b9dbb7" stroke="#cdcdcd"/><path d="M2.5 5.5h7" stroke="#c0c0c0"/></svg><svg style="left:489px;top:886.5px;" width="12" height="15" viewBox="0 0 12 15"><path d="M0.5 0.5V9L6 14.2L11.5 9V0.5z" fill="#b9dbb7" stroke="#cdcdcd"/><path d="M2.5 5.5h7" stroke="#c0c0c0"/></svg><svg style="left:489px;top:914.0px;" width="12" height="15" viewBox="0 0 12 15"><path d="M0.5 0.5V9L6 14.2L11.5 9V0.5z" fill="#b9dbb7" stroke="#cdcdcd"/><path d="M2.5 5.5h7" stroke="#c0c0c0"/></svg><svg style="left:489px;top:551.5px;" width="12" height="15" viewBox="0 0 12 15"><path d="M0.5 14.5V6L6 0.8L11.5 6V14.5z" fill="#b9dbb7" stroke="#cdcdcd"/><path d="M2.5 9h7" stroke="#c0c0c0"/></svg><svg style="left:512px;top:278px;" width="14" height="18" viewBox="0 0 14 18"><circle cx="7" cy="7" r="6.3" fill="#f0a30b"/><rect x="4" y="13" width="6" height="1.5" fill="#9a9a9a"/><rect x="4.5" y="15.5" width="5" height="1.5" fill="#9a9a9a"/></svg><svg style="left:1717px;top:116px;" width="13" height="13" viewBox="0 0 13 13"><circle cx="6.4" cy="6.4" r="6.3" fill="#db5c5c"/><rect x="5.4" y="2.6" width="2" height="5" fill="#c9e6c6"/><rect x="5.4" y="8.8" width="2" height="2" fill="#c9e6c6"/></svg><div class="a ui" style="left:1734px;top:116px;color:#6e6e6e">85</div><svg style="left:1762px;top:116px;" width="14" height="13" viewBox="0 0 14 13"><path d="M7 0L14 13H0z" fill="#f0c400"/><rect x="6.2" y="4" width="1.6" height="4.5" fill="#c9e6c6"/><rect x="6.2" y="9.6" width="1.6" height="1.6" fill="#c9e6c6"/></svg><div class="a ui" style="left:1780px;top:116px;color:#6e6e6e">8</div><svg style="left:1797px;top:116px;" width="14" height="13" viewBox="0 0 14 13"><path d="M7 0L14 13H0z" fill="#dcd0ae"/><rect x="6.2" y="4" width="1.6" height="4.5" fill="#c9e6c6"/><rect x="6.2" y="9.6" width="1.6" height="1.6" fill="#c9e6c6"/></svg><div class="a ui" style="left:1814px;top:116px;color:#6e6e6e">12</div><svg style="left:1845px;top:119px;" width="12" height="8" viewBox="0 0 12 8"><path d="M1 7L6 1.5L11 7" fill="none" stroke="#6e6e6e" stroke-width="1.6"/></svg><svg style="left:1872px;top:119px;" width="12" height="8" viewBox="0 0 12 8"><path d="M1 1L6 6.5L11 1" fill="none" stroke="#6e6e6e" stroke-width="1.6"/></svg><div class="a" style="left:1880px;top:167px;width:12px;height:95px;background:#a6c9a4;border:1px solid #98b896"></div><div class="a" style="left:1875px;top:188px;width:17px;height:2px;background:#d0605c;"></div><div class="a" style="left:1875px;top:197px;width:17px;height:2.5px;background:#e6c21e;"></div><div class="a" style="left:1875px;top:220px;width:17px;height:2px;background:#d7c8a6;"></div><div class="a" style="left:1875px;top:225px;width:17px;height:2px;background:#d0605c;"></div><div class="a" style="left:1875px;top:228px;width:17px;height:2px;background:#d0605c;"></div><div class="a" style="left:1875px;top:231px;width:17px;height:2px;background:#d0605c;"></div><div class="a" style="left:1875px;top:234px;width:17px;height:2px;background:#d0605c;"></div><div class="a" style="left:1875px;top:237px;width:17px;height:2px;background:#d0605c;"></div><div class="a" style="left:1875px;top:240px;width:17px;height:2px;background:#d0605c;"></div><div class="a" style="left:1875px;top:243px;width:17px;height:2px;background:#d0605c;"></div><div class="a" style="left:1875px;top:246px;width:17px;height:2px;background:#d0605c;"></div><div class="a" style="left:1875px;top:262px;width:17px;height:2px;background:#d0605c;"></div><div class="a" style="left:1875px;top:272px;width:17px;height:2px;background:#d0605c;"></div><div class="a" style="left:1875px;top:293px;width:17px;height:2px;background:#d7c8a6;"></div><div class="a" style="left:1875px;top:302px;width:17px;height:2px;background:#d0605c;"></div><div class="a" style="left:1875px;top:308px;width:17px;height:2px;background:#d0605c;"></div><div class="a" style="left:1875px;top:314px;width:17px;height:2px;background:#d0605c;"></div><div class="a" style="left:1875px;top:320px;width:17px;height:2px;background:#d0605c;"></div><div class="a" style="left:1875px;top:327px;width:17px;height:2px;background:#d0605c;"></div><div class="a" style="left:1875px;top:352px;width:17px;height:2px;background:#d7c8a6;"></div><div class="a" style="left:1875px;top:357px;width:17px;height:2px;background:#d0605c;"></div><div class="a" style="left:1875px;top:363px;width:17px;height:2px;background:#d0605c;"></div><div class="a" style="left:1875px;top:369px;width:17px;height:2px;background:#d0605c;"></div><div class="a" style="left:1875px;top:375px;width:17px;height:2px;background:#d0605c;"></div><div class="a" style="left:1875px;top:381px;width:17px;height:2px;background:#d0605c;"></div><div class="a" style="left:1875px;top:399px;width:17px;height:2px;background:#d7c8a6;"></div><div class="a" style="left:1875px;top:404px;width:17px;height:2px;background:#d0605c;"></div><div class="a" style="left:1875px;top:410px;width:17px;height:2px;background:#d0605c;"></div><div class="a" style="left:1875px;top:416px;width:17px;height:2px;background:#d0605c;"></div><div class="a" style="left:1875px;top:422px;width:17px;height:2px;background:#d0605c;"></div><div class="a" style="left:1875px;top:428px;width:17px;height:2px;background:#d0605c;"></div><div class="a" style="left:1875px;top:445px;width:17px;height:2px;background:#d7c8a6;"></div><div class="a" style="left:1875px;top:450px;width:17px;height:2px;background:#d0605c;"></div><div class="a" style="left:1875px;top:456px;width:17px;height:2px;background:#d0605c;"></div><div class="a" style="left:1875px;top:462px;width:17px;height:2px;background:#d0605c;"></div><div class="a" style="left:1875px;top:468px;width:17px;height:2px;background:#d0605c;"></div><div class="a" style="left:1875px;top:474px;width:17px;height:2px;background:#d0605c;"></div><div class="a" style="left:1875px;top:497px;width:17px;height:2px;background:#d0605c;"></div><div class="a" style="left:1875px;top:502px;width:17px;height:2px;background:#d0605c;"></div><div class="a" style="left:1875px;top:508px;width:17px;height:2px;background:#d0605c;"></div><div class="a" style="left:1875px;top:514px;width:17px;height:2px;background:#d0605c;"></div><div class="a" style="left:1875px;top:520px;width:17px;height:2px;background:#d0605c;"></div><div class="a" style="left:1875px;top:526px;width:17px;height:2px;background:#d0605c;"></div><div class="a" style="left:1875px;top:532px;width:17px;height:2px;background:#d0605c;"></div><div class="a" style="left:1875px;top:538px;width:17px;height:2px;background:#d0605c;"></div><div class="a" style="left:1875px;top:601px;width:17px;height:2px;background:#d7c8a6;"></div><div class="a" style="left:1875px;top:606px;width:17px;height:2px;background:#d0605c;"></div><div class="a" style="left:1875px;top:609px;width:17px;height:2px;background:#d0605c;"></div><div class="a" style="left:1875px;top:612px;width:17px;height:2px;background:#d0605c;"></div><div class="a" style="left:1875px;top:615px;width:17px;height:2px;background:#d0605c;"></div><div class="a" style="left:1875px;top:618px;width:17px;height:2px;background:#d0605c;"></div><div class="a" style="left:1875px;top:621px;width:17px;height:2px;background:#d0605c;"></div><div class="a" style="left:1875px;top:624px;width:17px;height:2px;background:#d0605c;"></div><div class="a" style="left:1875px;top:627px;width:17px;height:2px;background:#d0605c;"></div><div class="a" style="left:1875px;top:642px;width:17px;height:2.5px;background:#e6c21e;"></div><div class="a" style="left:1875px;top:645px;width:17px;height:2px;background:#d0605c;"></div><div class="a" style="left:1875px;top:651px;width:17px;height:2px;background:#d0605c;"></div><div class="a" style="left:1875px;top:671px;width:17px;height:2.5px;background:#e6c21e;"></div><div class="a" style="left:1875px;top:675px;width:17px;height:2px;background:#d0605c;"></div><div class="a" style="left:1875px;top:677.5px;width:17px;height:2px;background:#d7c8a6;"></div><div class="a" style="left:1875px;top:681px;width:17px;height:2px;background:#d0605c;"></div><div class="a" style="left:1875px;top:687.5px;width:17px;height:2px;background:#d0605c;"></div><div class="a" style="left:1875px;top:692.5px;width:17px;height:2px;background:#d0605c;"></div><div class="a" style="left:1875px;top:699px;width:17px;height:2px;background:#d0605c;"></div><div class="a" style="left:1875px;top:705px;width:17px;height:2px;background:#d0605c;"></div><div class="a" style="left:1875px;top:731px;width:17px;height:2.5px;background:#e6c21e;"></div><div class="a" style="left:1875px;top:735px;width:17px;height:2px;background:#d0605c;"></div><div class="a" style="left:1875px;top:737.5px;width:17px;height:2px;background:#d7c8a6;"></div><div class="a" style="left:1875px;top:741px;width:17px;height:2px;background:#d0605c;"></div><div class="a" style="left:1875px;top:747.5px;width:17px;height:2px;background:#d0605c;"></div><div class="a" style="left:1875px;top:752.5px;width:17px;height:2px;background:#d0605c;"></div><div class="a" style="left:1875px;top:759px;width:17px;height:2px;background:#d0605c;"></div><div class="a" style="left:1875px;top:765px;width:17px;height:2px;background:#d0605c;"></div><div class="a" style="left:1875px;top:781px;width:17px;height:2.5px;background:#e6c21e;"></div><div class="a" style="left:1875px;top:785px;width:17px;height:2px;background:#d0605c;"></div><div class="a" style="left:1875px;top:787.5px;width:17px;height:2px;background:#d7c8a6;"></div><div class="a" style="left:1875px;top:791px;width:17px;height:2px;background:#d0605c;"></div><div class="a" style="left:1875px;top:797.5px;width:17px;height:2px;background:#d0605c;"></div><div class="a" style="left:1875px;top:802.5px;width:17px;height:2px;background:#d0605c;"></div><div class="a" style="left:1875px;top:809px;width:17px;height:2px;background:#d0605c;"></div><div class="a" style="left:1875px;top:815px;width:17px;height:2px;background:#d0605c;"></div><div class="a" style="left:1875px;top:829px;width:17px;height:2.5px;background:#e6c21e;"></div><div class="a" style="left:1875px;top:833px;width:17px;height:2px;background:#d0605c;"></div><div class="a" style="left:1875px;top:835.5px;width:17px;height:2px;background:#d7c8a6;"></div><div class="a" style="left:1875px;top:839px;width:17px;height:2px;background:#d0605c;"></div><div class="a" style="left:1875px;top:845.5px;width:17px;height:2px;background:#d0605c;"></div><div class="a" style="left:1875px;top:850.5px;width:17px;height:2px;background:#d0605c;"></div><div class="a" style="left:1875px;top:857px;width:17px;height:2px;background:#d0605c;"></div><div class="a" style="left:1875px;top:863px;width:17px;height:2px;background:#d0605c;"></div><div class="a" style="left:1875px;top:885px;width:17px;height:2.5px;background:#e6c21e;"></div><div class="a" style="left:1875px;top:889px;width:17px;height:2px;background:#d0605c;"></div><div class="a" style="left:1875px;top:891.5px;width:17px;height:2px;background:#d7c8a6;"></div><div class="a" style="left:1875px;top:895px;width:17px;height:2px;background:#d0605c;"></div><div class="a" style="left:1875px;top:901px;width:17px;height:2px;background:#d0605c;"></div><div class="a" style="left:1875px;top:907px;width:17px;height:2px;background:#d0605c;"></div><div class="a" style="left:1875px;top:913px;width:17px;height:2px;background:#d0605c;"></div><div class="a" style="left:1875px;top:919px;width:17px;height:2px;background:#d0605c;"></div><div class="a" style="left:1875px;top:925px;width:17px;height:2px;background:#d0605c;"></div><div class="a" style="left:1875px;top:931px;width:17px;height:2px;background:#d0605c;"></div><svg style="left:622px;top:596px;" width="720" height="3" viewBox="0 0 720 3"><polyline points="0,1.5 3,0 6,1.5 9,0 12,1.5 15,0 18,1.5 21,0 24,1.5 27,0 30,1.5 33,0 36,1.5 39,0 42,1.5 45,0 48,1.5 51,0 54,1.5 57,0 60,1.5 63,0 66,1.5 69,0 72,1.5 75,0 78,1.5 81,0 84,1.5 87,0 90,1.5 93,0 96,1.5 99,0 102,1.5 105,0 108,1.5 111,0 114,1.5 117,0 120,1.5 123,0 126,1.5 129,0 132,1.5 135,0 138,1.5 141,0 144,1.5 147,0 150,1.5 153,0 156,1.5 159,0 162,1.5 165,0 168,1.5 171,0 174,1.5 177,0 180,1.5 183,0 186,1.5 189,0 192,1.5 195,0 198,1.5 201,0 204,1.5 207,0 210,1.5 213,0 216,1.5 219,0 222,1.5 225,0 228,1.5 231,0 234,1.5 237,0 240,1.5 243,0 246,1.5 249,0 252,1.5 255,0 258,1.5 261,0 264,1.5 267,0 270,1.5 273,0 276,1.5 279,0 282,1.5 285,0 288,1.5 291,0 294,1.5 297,0 300,1.5 303,0 306,1.5 309,0 312,1.5 315,0 318,1.5 321,0 324,1.5 327,0 330,1.5 333,0 336,1.5 339,0 342,1.5 345,0 348,1.5 351,0 354,1.5 357,0 360,1.5 363,0 366,1.5 369,0 372,1.5 375,0 378,1.5 381,0 384,1.5 387,0 390,1.5 393,0 396,1.5 399,0 402,1.5 405,0 408,1.5 411,0 414,1.5 417,0 420,1.5 423,0 426,1.5 429,0 432,1.5 435,0 438,1.5 441,0 444,1.5 447,0 450,1.5 453,0 456,1.5 459,0 462,1.5 465,0 468,1.5 471,0 474,1.5 477,0 480,1.5 483,0 486,1.5 489,0 492,1.5 495,0 498,1.5 501,0 504,1.5 507,0 510,1.5 513,0 516,1.5 519,0 522,1.5 525,0 528,1.5 531,0 534,1.5 537,0 540,1.5 543,0 546,1.5 549,0 552,1.5 555,0 558,1.5 561,0 564,1.5 567,0 570,1.5 573,0 576,1.5 579,0 582,1.5 585,0 588,1.5 591,0 594,1.5 597,0 600,1.5 603,0 606,1.5 609,0 612,1.5 615,0 618,1.5 621,0 624,1.5 627,0 630,1.5 633,0 636,1.5 639,0 642,1.5 645,0 648,1.5 651,0 654,1.5 657,0 660,1.5 663,0 666,1.5 669,0 672,1.5 675,0 678,1.5 681,0 684,1.5 687,0 690,1.5 693,0 696,1.5 699,0 702,1.5 705,0 708,1.5 711,0 714,1.5 717,0" fill="none" stroke="#c6cfc5" stroke-width="1"/></svg></body></html>
